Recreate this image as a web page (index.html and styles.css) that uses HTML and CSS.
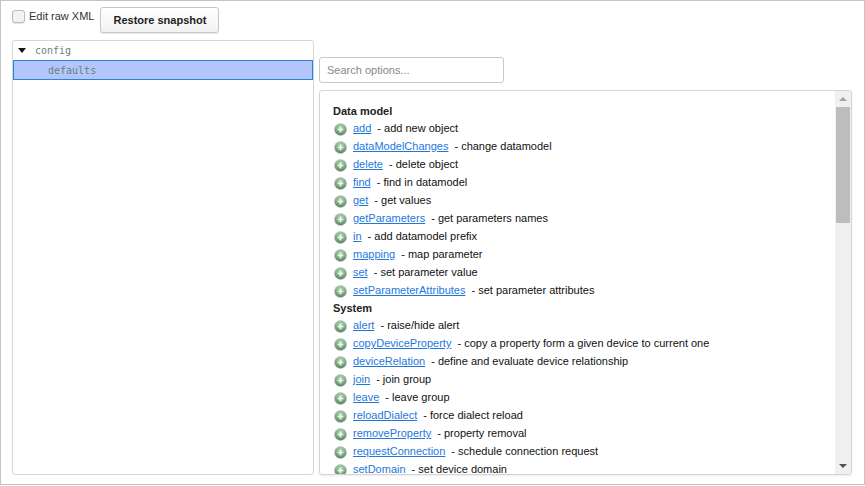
FILE: index.html
```html
<!DOCTYPE html>
<html>
<head>
<meta charset="utf-8"/>
<title>Config editor</title>
<link rel="stylesheet" href="styles.css">
</head>
<body>
<svg width="0" height="0" class="defs">
  <defs>
    <radialGradient id="ball" cx="50%" cy="30%" r="75%">
      <stop offset="0" stop-color="#b5d3b5"/>
      <stop offset="0.55" stop-color="#7fae82"/>
      <stop offset="1" stop-color="#4f7054"/>
    </radialGradient>
    <symbol id="plus" viewBox="0 0 14 14">
      <circle cx="7" cy="7" r="6.5" fill="url(#ball)" stroke="#b9c9ba" stroke-width="0.6"/>
      <path d="M7 4v6M4 7h6" stroke="#f4f8f4" stroke-width="1.8"/>
    </symbol>
  </defs>
</svg>
<div class="frame">
  <div class="toolbar">
    <label class="raw"><span class="check"></span>Edit raw XML</label>
    <button class="btn">Restore snapshot</button>
  </div>
  <div class="main">
    <div class="tree">
      <div class="node"><span class="caret"></span>config</div>
      <div class="node leaf">defaults</div>
    </div>
    <div class="side">
      <input class="search" type="text" placeholder="Search options...">
      <div class="panel">
        <div class="options">
          <h4>Data model</h4>
          <div class="opt"><svg class="ico"><use href="#plus"/></svg><a href="#">add</a><span>- add new object</span></div>
          <div class="opt"><svg class="ico"><use href="#plus"/></svg><a href="#">dataModelChanges</a><span>- change datamodel</span></div>
          <div class="opt"><svg class="ico"><use href="#plus"/></svg><a href="#">delete</a><span>- delete object</span></div>
          <div class="opt"><svg class="ico"><use href="#plus"/></svg><a href="#">find</a><span>- find in datamodel</span></div>
          <div class="opt"><svg class="ico"><use href="#plus"/></svg><a href="#">get</a><span>- get values</span></div>
          <div class="opt"><svg class="ico"><use href="#plus"/></svg><a href="#">getParameters</a><span>- get parameters names</span></div>
          <div class="opt"><svg class="ico"><use href="#plus"/></svg><a href="#">in</a><span>- add datamodel prefix</span></div>
          <div class="opt"><svg class="ico"><use href="#plus"/></svg><a href="#">mapping</a><span>- map parameter</span></div>
          <div class="opt"><svg class="ico"><use href="#plus"/></svg><a href="#">set</a><span>- set parameter value</span></div>
          <div class="opt"><svg class="ico"><use href="#plus"/></svg><a href="#">setParameterAttributes</a><span>- set parameter attributes</span></div>
          <h4>System</h4>
          <div class="opt"><svg class="ico"><use href="#plus"/></svg><a href="#">alert</a><span>- raise/hide alert</span></div>
          <div class="opt"><svg class="ico"><use href="#plus"/></svg><a href="#">copyDeviceProperty</a><span>- copy a property form a given device to current one</span></div>
          <div class="opt"><svg class="ico"><use href="#plus"/></svg><a href="#">deviceRelation</a><span>- define and evaluate device relationship</span></div>
          <div class="opt"><svg class="ico"><use href="#plus"/></svg><a href="#">join</a><span>- join group</span></div>
          <div class="opt"><svg class="ico"><use href="#plus"/></svg><a href="#">leave</a><span>- leave group</span></div>
          <div class="opt"><svg class="ico"><use href="#plus"/></svg><a href="#">reloadDialect</a><span>- force dialect reload</span></div>
          <div class="opt"><svg class="ico"><use href="#plus"/></svg><a href="#">removeProperty</a><span>- property removal</span></div>
          <div class="opt"><svg class="ico"><use href="#plus"/></svg><a href="#">requestConnection</a><span>- schedule connection request</span></div>
          <div class="opt"><svg class="ico"><use href="#plus"/></svg><a href="#">setDomain</a><span>- set device domain</span></div>
        </div>
        <div class="scrollbar">
          <span class="arrow up"></span>
          <div class="track"><div class="thumb"></div></div>
          <span class="arrow down"></span>
        </div>
      </div>
    </div>
  </div>
</div>
</body>
</html>
```

FILE: styles.css
```css
html, body {
   margin: 0;
   height: 100%;
   background-color: white;
}

body {
   font-family: "Liberation Sans", Arial, sans-serif;
   font-size: 11px;
   color: #222;
}

.defs {
   position: absolute;
}

.frame {
   box-sizing: border-box;
   width: 865px;
   height: 485px;
   border: 1px solid #c4c4c4;
   padding: 6px 12px 9px 11px;
   display: flex;
   flex-direction: column;
}

.toolbar {
   display: flex;
   align-items: flex-start;
   height: 33px;
}

.raw {
   display: flex;
   align-items: center;
   height: 18px;
   color: #333;
}

.check {
   box-sizing: border-box;
   width: 13px;
   height: 13px;
   margin-right: 4px;
   border: 1px solid #bbb;
   border-radius: 3px;
   background: #f3f3f3;
   box-shadow: 0 1px 1px rgba(0,0,0,0.1);
}

.btn {
   margin-left: 6px;
   width: 119px;
   height: 26px;
   padding: 0;
   font-family: inherit;
   font-size: 11px;
   font-weight: bold;
   color: #222;
   background: linear-gradient(#fff, #f2f2f2);
   border: 1px solid #c8c8c8;
   border-radius: 3px;
   box-shadow: 0 1px 1px rgba(0,0,0,0.1);
}

.main {
   flex: 1;
   display: flex;
   gap: 5px;
   min-height: 0;
}

.tree {
   box-sizing: border-box;
   width: 302px;
   border: 1px solid #d6d6d6;
   border-radius: 3px;
   font-family: "DejaVu Sans Mono", monospace;
   font-size: 10px;
   color: #6b7f7d;
}

.node {
   display: flex;
   align-items: center;
   height: 19px;
   padding-left: 22px;
   position: relative;
}

.caret {
   position: absolute;
   left: 5px;
   top: 7px;
   border-left: 4.5px solid transparent;
   border-right: 4.5px solid transparent;
   border-top: 5px solid #111;
}

.leaf {
   box-sizing: border-box;
   height: 20px;
   padding-left: 34px;
   background: #b3c6fb;
   border: 1px solid #2a82da;
}

.side {
   flex: 1;
   display: flex;
   flex-direction: column;
   min-width: 0;
}

.search {
   box-sizing: border-box;
   display: block;
   width: 185px;
   height: 26px;
   margin-top: 17px;
   margin-bottom: 7px;
   padding: 0 7px;
   font-family: inherit;
   font-size: 11px;
   border: 1px solid #c8c8c8;
   border-radius: 3px;
   outline: none;
}

.search::placeholder {
   color: #888;
}

.panel {
   flex: 1;
   display: flex;
   min-height: 0;
   border: 1px solid #d6d6d6;
   border-radius: 3px;
   box-shadow: 0 1px 2px rgba(0,0,0,0.08);
   overflow: hidden;
}

.options {
   flex: 1;
   overflow: hidden;
   padding: 12px 12px 0 12px;
}

.options h4 {
   margin: 0;
   padding-left: 1px;
   height: 17px;
   line-height: 17px;
   font-size: 11px;
   font-weight: bold;
   color: #222;
}

.opt {
   display: flex;
   align-items: center;
   height: 18px;
   white-space: nowrap;
   color: #111;
}

.opt a,
.opt span {
   margin-bottom: 2px;
}

.ico {
   width: 13px;
   height: 13px;
   margin: 0 6px 0 2px;
   flex: none;
}

.opt a {
   color: #1f78dc;
   margin-right: 6px;
}

.scrollbar {
   width: 16px;
   flex: none;
   background: #f0f0f0;
   display: flex;
   flex-direction: column;
   align-items: center;
}

.arrow {
   flex: none;
   width: 0;
   height: 0;
   margin: 6px 0;
   border-left: 4px solid transparent;
   border-right: 4px solid transparent;
}

.up {
   border-bottom: 4px solid #a3a3a3;
}

.down {
   border-top: 4px solid #505050;
}

.track {
   flex: 1;
   width: 100%;
}

.thumb {
   height: 116px;
   margin: 0 1px;
   background: #bdbdbd;
}
```
